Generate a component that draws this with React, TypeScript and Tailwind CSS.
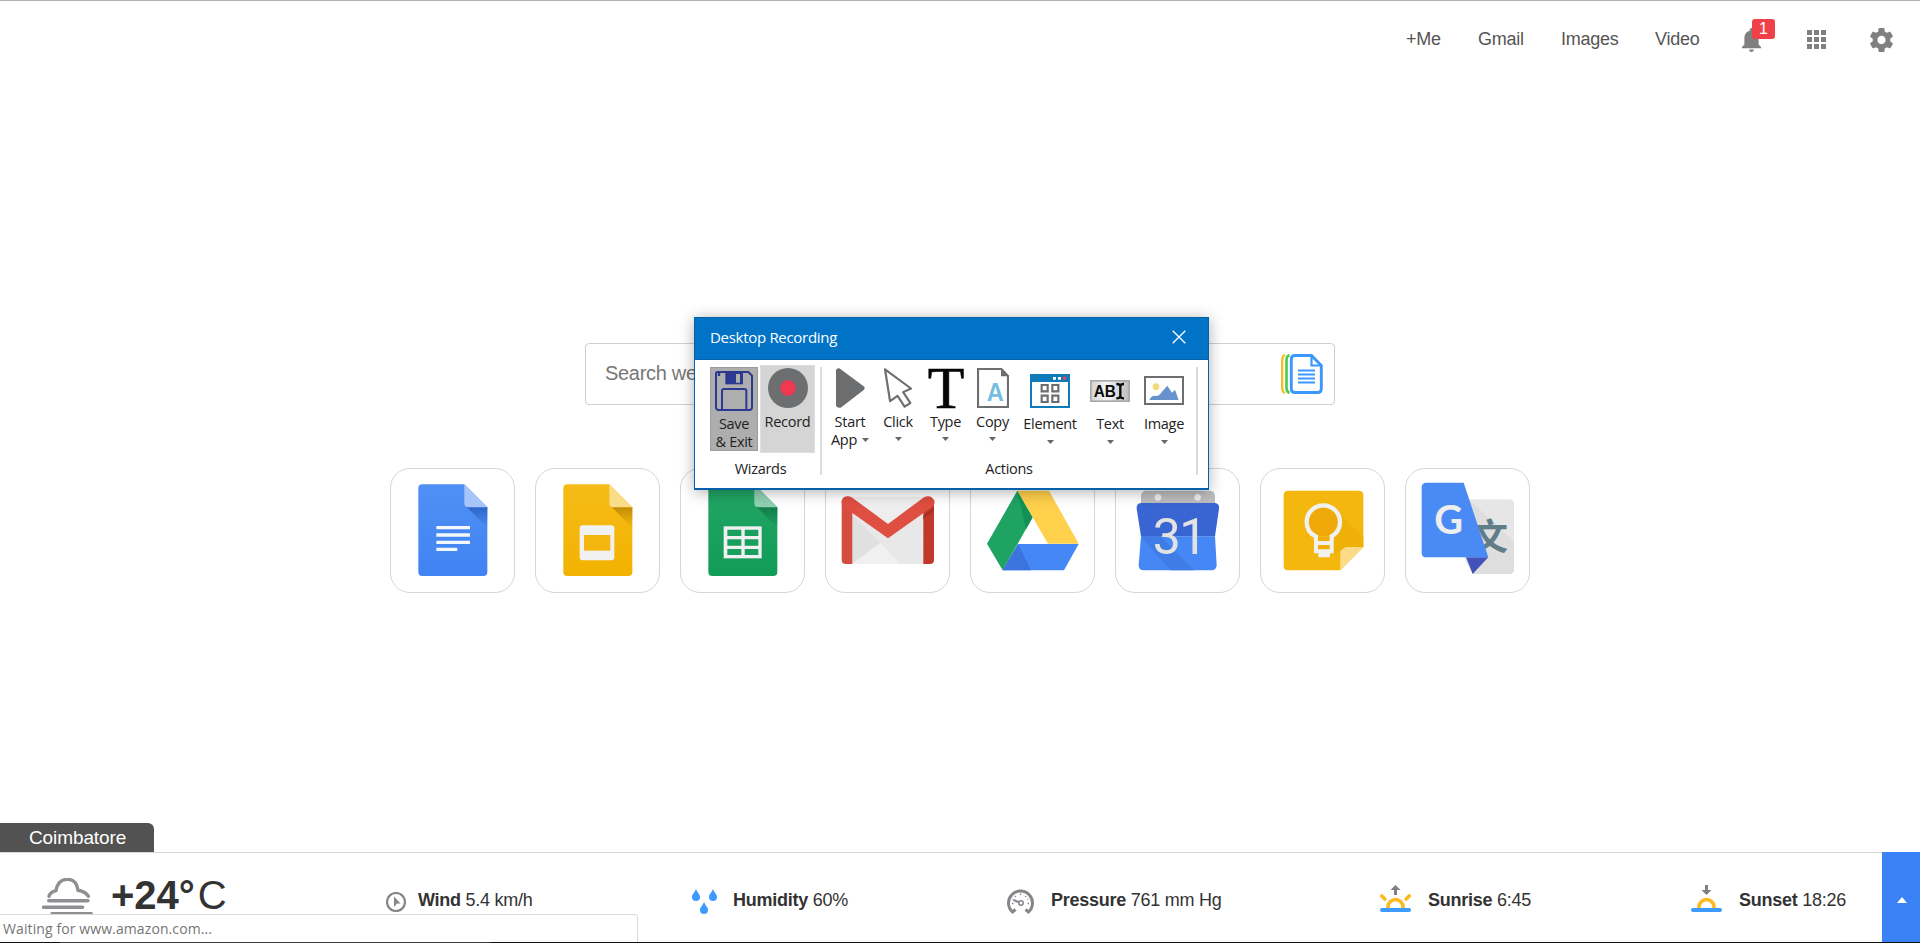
import type { ReactNode } from "react";

function Art({ box, className, children }: { box: string; className: string; children: ReactNode }) {
  return (
    <svg viewBox={box} preserveAspectRatio="none" fill="none" className={`block shrink-0 ${className}`}>
      {children}
    </svg>
  );
}

function Tile({ right, children }: { right?: boolean; children: ReactNode }) {
  return (
    <div className="h-[125px] w-[125px] rounded-[20px] border border-[#d6d6d6] bg-white">
      <Art box={right ? "467 41 369 369" : "32 41 369 369"} className="h-[123px] w-[123px]">
        {children}
      </Art>
    </div>
  );
}

function Sheet({ id, top, bottom, fold, shade, children }: { id: string; top: string; bottom: string; fold: string; shade: string; children: ReactNode }) {
  return (
    <>
      <defs>
        <linearGradient id={id} x1="0" y1="0" x2="0" y2="1">
          <stop stopColor={top} />
          <stop offset="1" stopColor={bottom} />
        </linearGradient>
        <linearGradient id={id + "s"} x1="0" y1="0" x2="0" y2="1">
          <stop stopColor={shade} />
          <stop offset="1" stopColor={shade} stopOpacity="0" />
        </linearGradient>
      </defs>
      <path d="M126 87H252L321 156V350Q321 362 309 362H126Q114 362 114 350V99Q114 87 126 87Z" fill={`url(#${id})`} />
      <path d="M256 152L321 217V156Z" fill={`url(#${id}s)`} />
      <path d="M252 87L321 156H264Q252 156 252 144Z" fill={fold} />
      {children}
    </>
  );
}

function Tiles() {
  return (
    <div className="mt-[63px] ml-[390px] flex gap-5">
      <Tile>
        <Sheet id="doc" top="#5090f5" bottom="#4083f2" fold="#a6c5fa" shade="#2b63c4">
          <path d="M168 217H269M168 239H269M168 261H269M168 282H231" stroke="#f4f7fd" strokeWidth="10" />
        </Sheet>
      </Tile>
      <Tile right>
        <g transform="translate(435 0)">
          <Sheet id="slide" top="#f6bb18" bottom="#f2b200" fold="#fbdc87" shade="#c08a05">
            <rect x="163" y="210" width="104" height="105" rx="9" fill="#f1f1f1" />
            <rect x="176" y="239" width="79" height="47" fill="#f4b70f" />
          </Sheet>
        </g>
      </Tile>
      <Tile>
        <Sheet id="sheet" top="#23a566" bottom="#119c57" fold="#8fd1b1" shade="#117a48">
          <rect x="160" y="213" width="114" height="96" fill="#f1f1f1" />
          <path d="M171 223H213V242H171ZM223 223H264V242H223ZM171 252H213V271H171ZM223 252H264V271H223ZM171 281H213V299H171ZM223 281H264V299H223Z" fill="#1aa05e" />
        </Sheet>
      </Tile>
      <Tile right>
        <path d="M530 124H776V326H530Z" fill="#eeeeee" />
        <path d="M546 174L630 262L546 326Z" fill="#e0e0e0" />
        <path d="M546 168L653 249L759 168V326H690L630 262L546 180Z" fill="#e8e8e8" />
        <path d="M630 262L690 326H546Z" fill="#f0f0f0" />
        <path d="M514 145L546 168V326H526Q514 326 514 314Z" fill="#d54c40" />
        <path d="M791 145L759 168V326H779Q791 326 791 314Z" fill="#c1392b" />
        <path d="M759 180L791 155V168L759 192Z" fill="#a83226" />
        <path d="M546 127L653 206L759 127Q773 119 784 126Q799 138 788 153L653 249L518 153Q507 138 520 126Q532 119 546 127Z" fill="#de4e41" />
      </Tile>
      <Tile>
        <path d="M171 106L217 186L127 345L80 265Z" fill="#1ea362" />
        <path d="M171 106L217 186L197 222Z" fill="#149158" />
        <path d="M171 106H266L355 265H263Z" fill="#ffd04b" />
        <path d="M173 266H355L311 345H127Z" fill="#4587f4" />
        <path d="M173 266L212 345H127Z" fill="#3a74dc" />
      </Tile>
      <Tile right>
        <path d="M542 150V123Q542 106 559 106H747Q764 106 764 123V150Z" fill="#bdbdbd" />
        <circle cx="593" cy="126" r="10" fill="#eeeeee" />
        <circle cx="712" cy="126" r="10" fill="#eeeeee" />
        <path d="M542 243H764L769 330Q768 345 753 345H549Q535 345 535 330Z" fill="#4587f4" />
        <path d="M542 243H600L700 345H630Z" fill="#3f7ce6" />
        <path d="M542 143H764Q778 145 776 160L764 243H542L529 160Q528 145 542 143Z" fill="#3965d2" />
        <text x="577 657" y="297" fontFamily="Roboto, sans-serif" fontSize="150" fill="#e2e2e2">31</text>
      </Tile>
      <Tile>
        <path d="M114 106H325Q339 106 339 120V275L270 345H114Q100 345 100 331V120Q100 106 114 106Z" fill="#f4b70d" />
        <path d="M339 275L270 345V291Q270 275 286 275Z" fill="#fbdb87" />
        <path d="M261 170L339 246V275H286L250 300V245Z" fill="#efb108" />
        <path d="M197 250V244C177 234 169 219 169 200A50 50 0 0 1 269 200C269 219 261 234 243 244V250Z" fill="#efa908" stroke="#f1f1f1" strokeWidth="13" />
        <path d="M191 246H250V294H239V306H204V294H191Z" fill="#f1f1f1" />
        <path d="M203 243H238V257H203ZM203 269H238V282H203Z" fill="#efae0a" />
      </Tile>
      <Tile right>
        <path d="M654 132H777Q791 132 791 146V342Q791 356 777 356H667L640 306Z" fill="#e6e6e6" />
        <path d="M655 132L760 230L791 260V342Q791 356 777 356H667L714 306Z" fill="#dedede" />
        <text x="663" y="285" fontFamily="'Noto Sans CJK SC', sans-serif" fontWeight="700" fontSize="110" fill="#607d88">文</text>
        <path d="M647 306H714L667 356Z" fill="#4352b8" />
        <path d="M528 82H640L714 306H528Q514 306 514 292V96Q514 82 528 82Z" fill="#4a8af4" />
        <text x="595" y="237" textAnchor="middle" fontFamily="Lato, sans-serif" fontWeight="700" fontSize="119" fill="#eeeeee">G</text>
      </Tile>
    </div>
  );
}

function Header() {
  return (
    <header className="flex h-[78px] shrink-0 items-center border-t border-[#b0b0b0] text-[18px] text-[#555]">
      <nav className="ml-[1406px] flex shrink-0 tracking-[-0.25px] whitespace-nowrap">
        <a className="w-[72px]">+Me</a>
        <a className="w-[83px]">Gmail</a>
        <a className="w-[94px]">Images</a>
        <a className="w-[87px]">Video</a>
      </nav>
      <div className="relative">
        <Art box="4 2.5 16 19.5" className="h-[24px] w-[19px]">
          <path d="M12 22c1.1 0 2-.9 2-2h-4c0 1.1.9 2 2 2zm6-6v-5c0-3.07-1.63-5.64-4.5-6.32V4c0-.83-.67-1.5-1.5-1.5s-1.5.67-1.5 1.5v.68C7.64 5.36 6 7.92 6 11v5l-2 2v1h16v-1l-2-2z" fill="#808080" />
        </Art>
        <span className="absolute -top-[9px] left-[10px] flex h-5 w-[23px] items-center justify-center rounded-[3px] bg-[#f04149] text-[16px] text-white">1</span>
      </div>
      <Art box="0 0 19 19" className="ml-[46px] h-[19px] w-[19px]">
        <path d="M0 0h5v5H0zM7 0h5v5H7zM14 0h5v5h-5zM0 7h5v5H0zM7 7h5v5H7zM14 7h5v5h-5zM0 14h5v5H0zM7 14h5v5H7zM14 14h5v5h-5z" fill="#808080" />
      </Art>
      <Art box="2.2 2 19.6 20" className="ml-[44px] h-[24px] w-[23px]">
        <path d="M19.43 12.98c.04-.32.07-.64.07-.98s-.03-.66-.07-.98l2.11-1.65c.19-.15.24-.42.12-.64l-2-3.46c-.12-.22-.39-.3-.61-.22l-2.49 1c-.52-.4-1.08-.73-1.69-.98l-.38-2.65C14.46 2.18 14.25 2 14 2h-4c-.25 0-.46.18-.49.42l-.38 2.65c-.61.25-1.17.59-1.69.98l-2.49-1c-.23-.09-.49 0-.61.22l-2 3.46c-.13.22-.07.49.12.64l2.11 1.65c-.04.32-.07.65-.07.98s.03.66.07.98l-2.11 1.65c-.19.15-.24.42-.12.64l2 3.46c.12.22.39.3.61.22l2.49-1c.52.4 1.08.73 1.69.98l.38 2.65c.03.24.24.42.49.42h4c.25 0 .46-.18.49-.42l.38-2.65c.61-.25 1.17-.59 1.69-.98l2.49 1c.23.09.49 0 .61-.22l2-3.46c.12-.22.07-.49-.12-.64l-2.11-1.65zM12 15.5c-1.93 0-3.5-1.57-3.5-3.5s1.57-3.5 3.5-3.5 3.5 1.57 3.5 3.5-1.57 3.5-3.5 3.5z" fill="#808080" />
      </Art>
    </header>
  );
}

function SearchBox() {
  return (
    <div className="mt-[265px] ml-[585px] flex h-[62px] w-[750px] items-center justify-between rounded-[4px] border border-[#d0d0d0] pr-[11px] pl-[19px]">
      <span className="-mt-[2px] text-[20px] tracking-[-0.3px] text-[#777]">Search web</span>
      <Art box="0 0 42 40" className="h-10 w-[42px]">
        <path d="M4 1Q1.200 2 1.200 6V34Q1.200 38 4 39" stroke="#f5b921" strokeWidth="2.200" />
        <path d="M8.500 1Q5.500 2 5.500 6V34Q5.500 38 8.500 39" stroke="#4ccb48" strokeWidth="2.600" />
        <path d="M14 1.500H30.500L40.300 11.500V35Q40.300 38.500 36.500 38.500H14Q10.300 38.500 10.300 35V5Q10.300 1.500 14 1.500Z" stroke="#3b97fb" strokeWidth="2.900" fill="#fff" />
        <path d="M30.500 1.500V11.500H40M17 16.500H34M17 20.500H34M17 24.500H34M17 28.500H34" stroke="#3b97fb" strokeWidth="2.200" />
      </Art>
    </div>
  );
}

function Caret() {
  return (
    <svg viewBox="0 0 7 4" className="h-1 w-[7px] shrink-0">
      <path d="M0 0h7L3.500 4z" fill="#666" />
    </svg>
  );
}

function Action({ width, label, low, children }: { width: string; label: string; low?: boolean; children: ReactNode }) {
  return (
    <div className={`flex shrink-0 flex-col items-center ${width}`}>
      <div className="flex h-10 items-end">{children}</div>
      <span className={`leading-[18px] ${low ? "mt-[7px]" : "mt-[5px]"}`}>{label}</span>
      {label === "Start" ? (
        <span className="flex items-center gap-[5px] leading-[17px]">
          App <Caret />
        </span>
      ) : (
        <div className={low ? "mt-[7px]" : "mt-1.5"}>
          <Caret />
        </div>
      )}
    </div>
  );
}

function RecorderWindow() {
  return (
    <section className="absolute top-[317px] left-[694px] flex h-[173px] w-[515px] flex-col border border-b-2 border-[#0561ab] bg-white font-['Open_Sans',sans-serif] text-[14.500px] tracking-[-0.3px] whitespace-nowrap text-[#222] shadow-[0_2px_14px_rgba(0,0,0,0.32)]">
      <div className="flex h-[42px] shrink-0 items-center justify-between border-b border-[#0561ab] bg-[#0173c7] pr-[22px] pb-[3px] pl-[15px] text-[15px] tracking-[-0.300px] text-white">
        <span>Desktop Recording</span>
        <Art box="0 0 14 14" className="h-[14px] w-[14px]">
          <path d="M.7.7l12.600 12.600M13.300.7L.7 13.300" stroke="#fff" strokeWidth="1.300" />
        </Art>
      </div>
      <div className="flex h-[128px]">
        <div className="ml-[15px] flex w-[105px] shrink-0 flex-col pt-[5px]">
          <div className="flex gap-[2px]">
            <div className="mt-[2px] flex h-[84px] w-12 flex-col items-center border border-[#9d9d9d] bg-[#aeaeae] pt-[3px]">
              <Art box="105 198 114 120" className="h-10 w-[38px]">
                <path d="M112 201H205L216 212V307Q216 315 208 315H116Q108 315 108 307V205Q108 201 112 201Z" stroke="#2b3990" strokeWidth="6" />
                <path d="M136 200H189V238H136Z" fill="#2b3990" />
                <path d="M168 207H180V233H168Z" fill="#aeaeae" />
                <path d="M126 314V258Q126 252 132 252H193Q199 252 199 258V314" stroke="#2b3990" strokeWidth="6" />
                <path d="M117 203V213" stroke="#2b3990" strokeWidth="7" />
              </Art>
              <span className="mt-[4px] text-center leading-[18px]">Save<br />&amp; Exit</span>
            </div>
            <div className="flex h-[88px] w-[55px] flex-col items-center border border-[#dedede] bg-[#d5d5d5] pt-[2px]">
              <Art box="0 0 40 40" className="h-10 w-10">
                <circle cx="20" cy="20" r="20" fill="#6d6e70" />
                <circle cx="20" cy="20" r="7.700" fill="#f0384f" />
              </Art>
              <span className="mt-[5px] leading-[18px]">Record</span>
            </div>
          </div>
          <span className="mt-[7px] pr-[4px] text-center leading-[18px]">Wizards</span>
        </div>
        <div className="mt-[7px] ml-[5px] h-[108px] w-[2px] shrink-0 bg-[#dcdcdc]" />
        <div className="ml-1 flex w-[366px] flex-col pt-2">
          <div className="flex h-[85px]">
            <Action width="w-12" label="Start">
              <Art box="468 188 87 121" className="h-10 w-[29px]">
                <path d="M468 194Q470 188 478 189L552 244Q556 249 552 254L482 308Q472 310 468 303Z" fill="#6d6e70" />
              </Art>
            </Action>
            <Action width="w-12" label="Click">
              <Art box="612 188 83 121" className="h-10 w-[28px]">
                <path d="M615 192L692 250L669 261L690 294L673 305L652 272L630 288Z" stroke="#6d6e70" strokeWidth="6.500" strokeLinejoin="round" />
              </Art>
            </Action>
            <Action width="w-[47px]" label="Type">
              <Art box="0 0 36 40" className="h-10 w-9 overflow-visible">
                <text x="18" y="40" textAnchor="middle" fontFamily="'Liberation Serif', serif" fontSize="60" fill="#050505" stroke="#050505" strokeWidth="0.6">T</text>
              </Art>
            </Action>
            <Action width="w-[47px]" label="Copy">
              <Art box="81 189 96 120" className="h-10 w-8">
                <path d="M84 192H154L174 213V306H84Z" fill="#fff" stroke="#6d6e70" strokeWidth="6.500" />
                <path d="M153 190L177 214H153Z" fill="#6d6e70" />
                <text x="136" y="288" textAnchor="middle" textLength="51" lengthAdjust="spacingAndGlyphs" fontFamily="'Liberation Sans', sans-serif" fontWeight="700" fontSize="77" fill="#77bde3">A</text>
              </Art>
            </Action>
            <Action width="w-[68px]" label="Element" low>
              <Art box="240 207 120 102" className="h-[34px] w-10">
                <rect x="243" y="210" width="114" height="96" fill="#fff" stroke="#0f7bb8" strokeWidth="6" />
                <path d="M240 207H360V231H240Z" fill="#0f7bb8" />
                <path d="M309 216H318V224H309ZM324 216H333V224H324Z" fill="#fff" />
                <path d="M339 215H348V224H339Z" fill="#f0435c" />
                <path d="M275 240H293V259H275ZM307 240H325V259H307ZM275 272H293V291H275ZM307 272H325V291H307Z" stroke="#6d6e70" strokeWidth="6.500" />
              </Art>
            </Action>
            <Action width="w-[52px]" label="Text" low>
              <Art box="420 225 120 66" className="mb-[6px] h-[22px] w-10">
                <defs>
                  <linearGradient id="field">
                    <stop stopColor="#d2d2d2" />
                    <stop offset=".4" stopColor="#f6f6f6" />
                    <stop offset="1" stopColor="#bdbdbd" />
                  </linearGradient>
                </defs>
                <rect x="422.500" y="227.500" width="115" height="61" fill="url(#field)" stroke="#aaaaa5" strokeWidth="5" />
                <text x="431" y="275" textLength="66" lengthAdjust="spacingAndGlyphs" fontFamily="'Liberation Sans', sans-serif" fontWeight="700" fontSize="49" fill="#0a0a0a">AB</text>
                <path d="M499 237Q510 237 511 243Q512 237 522 237M511 242V274M499 280Q510 280 511 274Q512 280 522 280" stroke="#0a0a0a" strokeWidth="7" />
              </Art>
            </Action>
            <Action width="w-14" label="Image" low>
              <Art box="582 213 120 87" className="mb-[3px] h-[29px] w-10">
                <rect x="585" y="216" width="114" height="81" fill="#fff" stroke="#6d6e70" strokeWidth="6" />
                <circle cx="618" cy="245" r="10" fill="#f2db7d" />
                <path d="M598 285Q604 272 613 272Q620 274 628 270L636 260L652 242L666 263L675 254L686 285Z" fill="#6792cd" />
              </Art>
            </Action>
          </div>
          <span className="mt-[7px] text-center leading-[18px]">Actions</span>
        </div>
        <div className="mt-[7px] ml-[4px] h-[108px] w-[2px] shrink-0 bg-[#d9dcdc]" />
      </div>
    </section>
  );
}

function Metric({ width, name, value, children }: { width: string; name: string; value: string; children: ReactNode }) {
  return (
    <div className={`flex shrink-0 whitespace-nowrap ${width}`}>
      <div className="flex h-[30px] items-end">{children}</div>
      <span className="mt-[5px] leading-[20px] tracking-[-0.25px]"><b>{name}</b> {value}</span>
    </div>
  );
}

function Horizon({ rise }: { rise?: boolean }) {
  return (
    <Art box="0 0 31 27" className="mr-[17px] mb-[3px] h-[27px] w-[31px]">
      <path d="M8 23V22a7.500 7.500 0 0 1 15 0V23" stroke="#fdb91f" strokeWidth="3.600" />
      {rise && <path d="M1.800 11L4.800 14M29.200 11L26.200 14" stroke="#fdb91f" strokeWidth="3.600" strokeLinecap="round" />}
      <path d="M2 25H29" stroke="#3d9bff" strokeWidth="4" strokeLinecap="round" />
      <path d={rise ? "M15.500 0L20.500 5H17V10H14V5H10.500Z" : "M15.500 10L20.500 5H17V0H14V5H10.500Z"} fill="#808080" />
    </Art>
  );
}

function Weather() {
  return (
    <footer className="mt-auto flex flex-col">
      <div className="flex h-[29px] w-[154px] items-center rounded-tr-[6px] bg-[#525252] pt-px pl-[29px] text-[19px] tracking-[-0.1px] text-white">Coimbatore</div>
      <div className="flex h-[90px] border-t border-[#d6d6d6] pt-[32px] text-[18px] text-[#333]">
        <Art box="126 203 153 112" className="mt-[-7px] ml-[42px] h-[38px] w-[51px]">
          <path d="M147 257Q150 244 168 240Q174 207 202 207Q230 207 234 239Q258 243 265 257M146 270H264M130 289H248M156 308H274" stroke="#8f8f93" strokeWidth="10" strokeLinecap="round" />
        </Art>
        <div className="-mt-[10px] ml-[18px] flex w-[275px] shrink-0 leading-[40px] text-[#333]">
          <b className="text-[40px]">+24°</b>
          <span className="ml-[3px] text-[40px]">C</span>
        </div>
        <Metric width="w-[306px]" name="Wind" value="5.4 km/h">
          <Art box="0 0 20 20" className="mr-[12px] mb-[3px] h-5 w-5">
            <circle cx="10" cy="10" r="9" stroke="#85858a" strokeWidth="2.200" />
            <path d="M8 4.500L14.500 11.500L11 11.500L8 15Z" fill="#85858a" />
          </Art>
        </Metric>
        <Metric width="w-[315px]" name="Humidity" value="60%">
          <Art box="0 0 25 25" className="mr-[16px] mb-[1px] h-[25px] w-[25px]">
            <path d="M4 0C5.500 4 8 5 8 8A4 4 0 0 1 0 8C0 5 2.500 4 4 0ZM21 0C22.500 4 25 5 25 8A4 4 0 0 1 17 8C17 5 19.500 4 21 0ZM12 13C13.500 17 16 18 16 21A4 4 0 0 1 8 21C8 18 10.500 17 12 13Z" fill="#3d9bff" />
          </Art>
        </Metric>
        <Metric width="w-[373px]" name="Pressure" value="761 mm Hg">
          <Art box="0 0 27 25" className="mr-[17px] mb-[1px] h-[25px] w-[27px]">
            <path d="M8.500 20.500L5.500 23A12 12 0 1 1 21.500 23L18.500 20.500" stroke="#85858a" strokeWidth="3" />
            <path d="M5 14.500H6.500M20.500 14.500H22M13.500 4.500V6M8 6.800L8.700 8M19 6.800L18.300 8M5.600 10L6.500 10.500M21.400 10L20.500 10.500" stroke="#85858a" strokeWidth="1.300" />
            <circle cx="14" cy="14" r="2.200" stroke="#85858a" strokeWidth="1.500" />
            <path d="M6.500 11L12 13.200" stroke="#85858a" strokeWidth="2" />
          </Art>
        </Metric>
        <Metric width="w-[311px]" name="Sunrise" value="6:45"><Horizon rise /></Metric>
        <Metric width="w-[191px]" name="Sunset" value="18:26"><Horizon /></Metric>
        <button className="-mt-[33px] flex h-[90px] w-[38px] shrink-0 items-center justify-center bg-[#3c82f7]">
          <Art box="0 0 10 6" className="mt-[6px] ml-px h-[6px] w-[10px]"><path d="M5 0L10 6H0Z" fill="#fff" /></Art>
        </button>
      </div>
      <div className="flex h-px bg-[#111]"><div className="ml-[60px] w-[430px] bg-[#3c3c3c]" /></div>
    </footer>
  );
}

export default function App() {
  return (
    <main className="relative flex h-[943px] w-[1920px] flex-col overflow-hidden bg-white font-['Liberation_Sans',Arial,sans-serif]">
      <Header />
      <SearchBox />
      <Tiles />
      <Weather />
      <RecorderWindow />
      <div className="absolute bottom-px left-0 flex h-[28px] w-[638px] items-center rounded-tr-[4px] border-t border-r border-[#dadada] bg-white pl-[3px] font-['Open_Sans',sans-serif] text-[14px] tracking-[0.1px] text-[#757575]">
        Waiting for www.amazon.com...
      </div>
    </main>
  );
}
